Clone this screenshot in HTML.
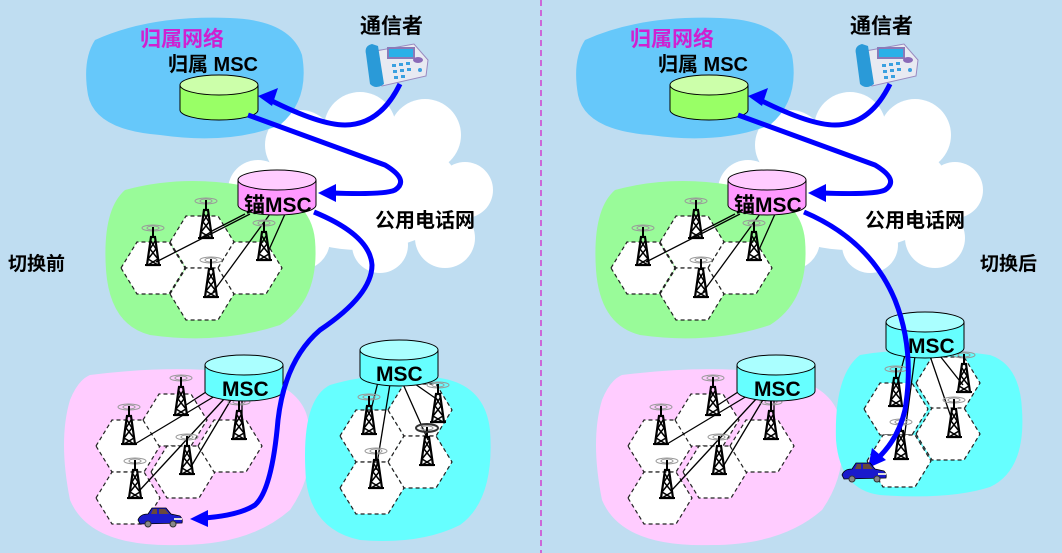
<!DOCTYPE html>
<html><head><meta charset="utf-8"><style>
html,body{margin:0;padding:0;background:#bfddf1;}
svg{display:block}
text{font-family:"Liberation Sans","Noto Sans CJK SC",sans-serif;font-weight:bold}
</style></head><body>
<svg width="1062" height="553" viewBox="0 0 1062 553" xmlns="http://www.w3.org/2000/svg">
<defs>
<symbol id="hex" overflow="visible"><polygon points="-32,0 -16,-26 16,-26 32,0 16,26 -16,26" fill="#fff" stroke="#222" stroke-width="1.2" stroke-dasharray="4,3"/></symbol>
<g id="tw">
 <ellipse cx="0" cy="-3" rx="11" ry="3" fill="none" stroke="#999" stroke-width="1"/>
 <ellipse cx="0" cy="-3" rx="6" ry="2" fill="none" stroke="#999" stroke-width="1"/>
 <line x1="0" y1="-4" x2="0" y2="6" stroke="#000" stroke-width="2"/>
 <path d="M-2,6 L2,6 L6,34 L-6,34 Z" fill="none" stroke="#000" stroke-width="2.2"/>
 <path d="M-2,10 L3,18 M2,10 L-3,18 M-3,18 L5,28 M3,18 L-5,28 M-5,28 L5,34 M5,28 L-5,34" stroke="#000" stroke-width="1.5"/>
 <line x1="-8" y1="34" x2="8" y2="34" stroke="#000" stroke-width="2"/>
</g>
<g id="car">
 <path d="M0,10 Q2,4 10,4 L14,-2 L28,-2 L33,4 L42,6 Q45,9 44,13 L2,14 Z" fill="#1a1acc" stroke="#000" stroke-width="0.8"/>
 <path d="M15,-1 L19,-1 L19,4 L13,4 Z M21,-1 L27,-1 L31,4 L21,4 Z" fill="#6a4a3a"/>
 <circle cx="10" cy="14" r="3" fill="#888" stroke="#333"/>
 <circle cx="35" cy="14" r="3" fill="#888" stroke="#333"/>
 <rect x="36" y="8" width="8" height="2" fill="#ddd"/>
</g>
<g id="phone">
 <path d="M8,12 L52,4 L66,20 L64,36 L20,46 L12,40 Z" fill="#e8eaf2" stroke="#9a8ac0" stroke-width="1"/>
 <path d="M4,14 Q2,6 10,4 L16,6 L22,44 Q14,50 8,44 Z" fill="#2a9ad8"/>
 <rect x="26" y="8" width="26" height="10" fill="#2ab0e8" stroke="#8a7ab8" stroke-width="2"/>
 <ellipse cx="56" cy="20" rx="5" ry="3" fill="#8a6ab8"/>
 <g fill="#3aa0e0"><rect x="30" y="24" width="4" height="3"/><rect x="37" y="23" width="4" height="3"/><rect x="44" y="22" width="4" height="3"/><rect x="31" y="30" width="4" height="3"/><rect x="38" y="29" width="4" height="3"/><rect x="45" y="28" width="4" height="3"/><rect x="32" y="36" width="4" height="3"/><rect x="39" y="35" width="4" height="3"/><circle cx="58" cy="30" r="2"/></g>
</g>
<g id="cloud" fill="#fff">
 <circle cx="300" cy="145" r="35"/><circle cx="360" cy="128" r="36"/><circle cx="425" cy="135" r="36"/>
 <circle cx="465" cy="190" r="28"/><circle cx="445" cy="238" r="30"/><circle cx="380" cy="245" r="28"/>
 <circle cx="300" cy="240" r="30"/><circle cx="258" cy="190" r="30"/><ellipse cx="360" cy="190" rx="100" ry="60"/>
</g>
<g id="top">
 <use href="#cloud"/>
 <path d="M95,40 Q150,15 230,18 Q290,20 302,55 Q310,100 280,125 Q230,145 160,135 Q95,130 88,95 Q82,60 95,40 Z" fill="#66c8fa"/>
 <path d="M125,190 Q180,175 240,185 Q310,190 315,240 Q320,300 280,325 Q220,345 150,335 Q110,325 106,270 Q102,210 125,190 Z" fill="#99fb99"/>
 <use href="#hex" x="153" y="268"/><use href="#hex" x="202" y="242"/><use href="#hex" x="202" y="294"/><use href="#hex" x="250" y="268"/>
 <g stroke="#000" stroke-width="1.3">
  <line x1="245" y1="214" x2="210" y2="232"/><line x1="250" y1="214" x2="156" y2="262"/>
  <line x1="270" y1="214" x2="213" y2="292"/><line x1="285" y1="214" x2="268" y2="252"/>
 </g>
 <use href="#tw" x="206" y="204"/><use href="#tw" x="153" y="231"/><use href="#tw" x="264" y="226"/><use href="#tw" x="211" y="263"/>
 <text x="140" y="46" font-size="21" fill="#d020d0">归属网络</text>
 <text x="168" y="71" font-size="20" fill="#000">归属 MSC</text>
 <path d="M180,85 L180,110 A39,10 0 0 0 258,110 L258,85" fill="#99ff66" stroke="#000" stroke-width="1"/>
 <ellipse cx="219" cy="85" rx="39" ry="10" fill="#ccffaa" stroke="#000" stroke-width="1"/>
 <path d="M238,180 L238,205 A39,10 0 0 0 316,205 L316,180" fill="#ff99ff" stroke="#000" stroke-width="1"/>
 <ellipse cx="277" cy="180" rx="39" ry="10" fill="#ffccff" stroke="#000" stroke-width="1"/>
 <text x="244" y="212" font-size="21" fill="#000">锚MSC</text>
 <text x="360" y="33" font-size="21" fill="#000">通信者</text>
 <text x="375" y="227" font-size="20" fill="#000">公用电话网</text>
 <use href="#phone" x="362" y="40"/>
 <path d="M400,84 Q380,125 345,125 Q320,125 270,100" fill="none" stroke="#0000ff" stroke-width="5"/>
 <polygon points="258,96 278,88 272,106" fill="#0000ff"/>
 <path d="M248,115 L385,165 Q410,180 395,190 Q385,195 332,193" fill="none" stroke="#0000ff" stroke-width="5"/>
 <polygon points="318,193 336,184 336,202" fill="#0000ff"/>
</g>
<g id="msccyl">
 <path d="M0,0 L0,26 A39,10 0 0 0 78,26 L78,0" fill="#66ffff" stroke="#000" stroke-width="1"/>
 <ellipse cx="39" cy="0" rx="39" ry="10" fill="#aaffff" stroke="#000" stroke-width="1"/>
</g>
<g id="pink">
 <path d="M90,375 Q170,365 230,372 Q300,380 308,420 Q318,470 290,510 Q250,545 180,545 Q90,548 70,500 Q58,440 70,400 Q78,380 90,375 Z" fill="#ffccff"/>
 <use href="#hex" x="128" y="446"/><use href="#hex" x="175" y="420"/><use href="#hex" x="183" y="472"/><use href="#hex" x="230" y="446"/><use href="#hex" x="128" y="498"/>
 <g stroke="#000" stroke-width="1.3">
  <line x1="206" y1="392" x2="186" y2="405"/><line x1="215" y1="396" x2="135" y2="444"/>
  <line x1="225" y1="398" x2="140" y2="490"/><line x1="232" y1="398" x2="192" y2="465"/><line x1="242" y1="398" x2="242" y2="420"/>
 </g>
 <use href="#tw" x="181" y="381"/><use href="#tw" x="129" y="410"/><use href="#tw" x="239" y="405"/><use href="#tw" x="187" y="440"/><use href="#tw" x="135" y="464"/>
 <use href="#msccyl" x="205" y="365"/>
 <text x="222" y="396" font-size="21" fill="#000">MSC</text>
</g>
</defs>

<use href="#top"/>
<use href="#top" x="490"/>
<use href="#pink"/>
<use href="#pink" x="532"/>

<path d="M330,385 Q380,370 440,378 Q485,385 490,430 Q495,500 460,525 Q420,545 360,540 Q312,530 306,480 Q300,400 330,385 Z" fill="#66ffff"/>
<use href="#hex" x="372" y="436"/><use href="#hex" x="420" y="410"/><use href="#hex" x="420" y="462"/><use href="#hex" x="372" y="488"/>
<g stroke="#000" stroke-width="1.3">
 <line x1="378" y1="382" x2="371" y2="410"/><line x1="390" y1="384" x2="376" y2="470"/>
 <line x1="403" y1="384" x2="428" y2="440"/><line x1="415" y1="384" x2="438" y2="400"/>
</g>
<use href="#tw" x="369" y="400"/><use href="#tw" x="438" y="388"/><use href="#tw" x="427" y="431"/><use href="#tw" x="376" y="454"/>
<ellipse cx="427" cy="428" rx="11" ry="4" fill="none" stroke="#333" stroke-width="2"/>
<use href="#msccyl" x="360" y="350"/>
<text x="376" y="381" font-size="21" fill="#000">MSC</text>

<path d="M314,212 Q370,235 372,265 Q372,295 320,330 Q285,360 278,420 Q272,490 255,505 Q240,515 205,518" fill="none" stroke="#0000ff" stroke-width="5"/>
<polygon points="190,519 208,510 208,527" fill="#0000ff"/>
<use href="#car" x="138" y="510"/>

<path d="M860,355 Q920,345 990,355 Q1020,365 1022,410 Q1026,470 990,487 Q950,500 880,495 Q840,490 836,440 Q834,375 860,355 Z" fill="#66ffff"/>
<use href="#hex" x="896" y="409"/><use href="#hex" x="948" y="383"/><use href="#hex" x="948" y="434"/><use href="#hex" x="899" y="461"/>
<g stroke="#000" stroke-width="1.3">
 <line x1="905" y1="355" x2="897" y2="385"/><line x1="915" y1="356" x2="904" y2="440"/>
 <line x1="930" y1="356" x2="952" y2="420"/><line x1="940" y1="356" x2="963" y2="385"/>
</g>
<use href="#tw" x="896" y="372"/><use href="#tw" x="964" y="358"/><use href="#tw" x="954" y="403"/><use href="#tw" x="901" y="425"/>
<use href="#msccyl" x="886" y="322"/>
<text x="908" y="353" font-size="21" fill="#000">MSC</text>
<path d="M804,212 Q870,240 895,300 Q915,350 905,410 Q898,440 876,460" fill="none" stroke="#0000ff" stroke-width="5"/>
<polygon points="868,468 872,448 886,460" fill="#0000ff"/>
<use href="#car" x="842" y="465"/>

<text x="8" y="270" font-size="19" fill="#000">切换前</text>
<text x="980" y="270" font-size="19" fill="#000">切换后</text>
<line x1="541" y1="0" x2="541" y2="553" stroke="#d040d0" stroke-width="1.5" stroke-dasharray="6,4"/>
</svg>
</body></html>
